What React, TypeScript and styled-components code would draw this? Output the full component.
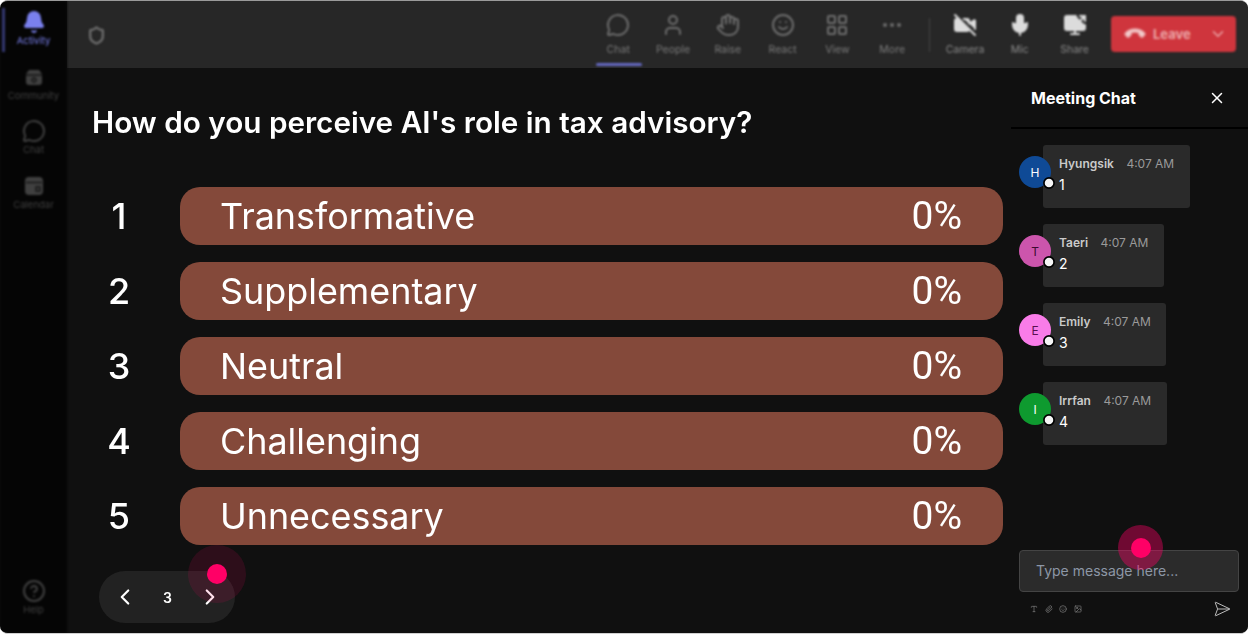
import React from "react";
import styled, { createGlobalStyle } from "styled-components";
import { Bell, MessageCircle, HelpCircle, Shield, User, Hand, Smile, LayoutGrid, MoreHorizontal, VideoOff, Mic, ScreenShare, Phone, ChevronDown, ChevronLeft, ChevronRight, X, SendHorizontal, Type, Paperclip, Image } from "lucide-react";

const Global = createGlobalStyle`
  html, body { margin: 0; padding: 0; background: #fff; }
  body { font-family: Inter, "Liberation Sans", sans-serif; }
  #root { width: 1248px; height: 634px; overflow: hidden; }
`;

const Frame = styled.div`
  position: relative; width: 1248px; border-top: 1px solid #9a9a9a; box-sizing: content-box;
  height: 632px; border-bottom: 1px solid #d0d0d0;
  display: flex; background: #101010; border-radius: 8px; overflow: hidden; color: #fff;
`;
const Rail = styled.nav`
  width: 67px; flex: none; background: #050505; display: flex; flex-direction: column; align-items: center;
  position: relative; padding-top: 9px; box-sizing: border-box; filter: blur(1.1px);
`;
const RailItem = styled.div<{ $active?: boolean }>`
  width: 100%; height: 54.5px; display: flex; flex-direction: column; align-items: center; gap: 1px;
  color: ${p => (p.$active ? "#7a80ee" : "#404040")};
  font-size: 9.5px; line-height: 12px; position: relative;
  ${p => p.$active ? `&::before { content: ""; position: absolute; left: 2px; top: -2px; width: 3px; height: 44px; background: #33376f; }` : ""}
`;
const RailFill = styled.div`flex: 1;`;
const Workspace = styled.div`flex: 1; display: flex; flex-direction: column; min-width: 0;`;
const TopBar = styled.header`
  height: 67px; flex: none; background: #272727; display: flex; align-items: center;
  padding: 0 12px 0 20px; box-sizing: border-box;
`;
const ShieldMark = styled.div`color: #6c6c6c; display: flex; filter: blur(0.9px); margin-top: 2px;`;
const Tools = styled.div`margin-left: auto; display: flex; align-items: flex-start; filter: blur(1.2px);`;
const Tool = styled.div<{ $bright?: boolean; $active?: boolean }>`
  width: 54.8px; height: 67px; position: relative; display: flex; flex-direction: column; align-items: center;
  padding-top: 12px; box-sizing: border-box; gap: 6px; font-size: 10.5px; line-height: 13px;
  color: ${p => (p.$bright ? "#dcdcdc" : "#6d6d6d")};
  & > span { color: ${p => (p.$bright ? "#8a8a8a" : "#7b7b7b")}; }
  ${p => p.$active ? `&::after { content: ""; position: absolute; left: 5px; right: 4px; bottom: 2px; height: 3px; border-radius: 2px; background: #6468c0; }` : ""}
`;
const Divider = styled.div`width: 1px; height: 34px; background: #444; margin: 17px 8px 0 9px;`;
const Leave = styled.div`
  width: 125px; height: 36px; margin: 15px 0 0 9px; background: #cf353d; border-radius: 4px; display: flex; align-items: center;
  padding: 0 9px 0 15px; box-sizing: border-box; gap: 9px; font-size: 13px; font-weight: 700; color: #eba6a8;
`;
const LeaveLabel = styled.span`flex: 1;`;
const Body = styled.div`flex: 1; display: flex; min-height: 0;`;
const Stage = styled.main`
  flex: 1; min-width: 0; padding: 35px 8px 0 25px; display: flex; flex-direction: column; position: relative;
`;
const Title = styled.h1`
  margin: 0 0 46px; font-size: 29.7px; line-height: 38px; font-weight: 600; color: #fff; white-space: nowrap;
`;
const Options = styled.div`display: flex; flex-direction: column; gap: 17px;`;
const Option = styled.div`display: flex; align-items: center; height: 58px;`;
const OptionNumber = styled.div`width: 88px; padding-right: 34px; text-align: center; font-size: 36px; font-weight: 500; box-sizing: border-box; flex: none; line-height: 56px;`;
const OptionBar = styled.div`
  flex: 1; height: 58px; border-radius: 20px; background: #84493a; display: flex; align-items: center; justify-content: space-between;
  padding: 0 41px 1px 40px; box-sizing: border-box; font-size: 35.9px; color: #fff;
`;
const Percent = styled.span`font-family: Roboto, Inter, sans-serif; font-size: 39px;`;
const Pager = styled.div`
  width: 136px; height: 52px; margin: 26px 0 0 7px; border-radius: 26px; background: #222; display: flex; align-items: center; justify-content: space-between;
  padding: 0 12px 0 13px; box-sizing: border-box; font-size: 14px; font-weight: 600;
`;
const Chat = styled.aside`width: 237px; flex: none; display: flex; flex-direction: column; background: #101010;`;
const ChatHeader = styled.div`
  height: 61px; flex: none; box-sizing: border-box; border-bottom: 2px solid #000; display: flex; align-items: center; justify-content: space-between;
  padding: 0 22px 0 20px; font-size: 16px; font-weight: 700;
`;
const Messages = styled.div`flex: 1; padding: 16px 8px 0; display: flex; flex-direction: column; gap: 16.5px;`;
const Message = styled.div`display: flex; align-items: center;`;
const Avatar = styled.div<{ $bg: string; $fg: string }>`
  width: 32px; height: 32px; border-radius: 50%; background: ${p => p.$bg}; color: ${p => p.$fg}; flex: none; margin: 0 -8px 8px 0;
  display: flex; align-items: center; justify-content: center; font-size: 12px; position: relative; z-index: 1;
`;
const Status = styled.i`
  position: absolute; right: -5px; bottom: -2px; width: 10px; height: 10px; border-radius: 50%; background: #f5f5f5; border: 2px solid #000; box-sizing: content-box; transform: scale(.85);
`;
const Bubble = styled.div<{ $w: number }>`
  width: ${p => p.$w}px; height: 62.5px; box-sizing: border-box; background: #2a2a2a; border-radius: 3px; padding: 9.6px 16px 0;
`;
const Meta = styled.div`display: flex; gap: 12.5px; font-size: 12px; line-height: 17px; white-space: nowrap;`;
const Author = styled.span`font-weight: 600; color: #c9c9c9;`;
const Time = styled.span`color: #9a9a9a;`;
const Text = styled.div`font-size: 14px; line-height: 20px; margin-top: 3.6px; color: #fff;`;
const Composer = styled.div`padding: 0 9px 0 8px;`;
const Input = styled.div`
  height: 42px; box-sizing: border-box; background: #2b2b2b; border: 1px solid #444; border-radius: 4px; display: flex; align-items: center;
  padding: 0 16px 2px; color: #8d97a6; font-size: 14px;
`;
const ComposerTools = styled.div`display: flex; align-items: center; height: 41px; padding: 0 8px 8px 11px; box-sizing: border-box; gap: 6.5px; color: #808080;`;
const SendSlot = styled.div`margin-left: auto; color: #d0d0d0; display: flex;`;
const Pointer = styled.div<{ $dim: number; $halo: number; $x: number; $y: number }>`
  position: absolute; left: ${p => p.$x}px; top: ${p => p.$y}px; width: ${p => p.$dim}px; height: ${p => p.$dim}px; border-radius: 50%;
  background: rgba(255, 0, 102, ${p => p.$halo}); display: flex; align-items: center; justify-content: center; z-index: 5;
  &::after { content: ""; width: 20px; height: 20px; border-radius: 50%; background: #ff0066; }
`;

const CommunityIcon = () => (
  <svg width="24" height="24" viewBox="0 0 24 24" fill="currentColor">
    <path d="M4 9 L7 5 H17 L20 9 V17 a3 3 0 0 1 -3 3 H7 a3 3 0 0 1 -3 -3 Z" />
    <path d="M4 10 H20 M12 13 a2 2 0 1 0 .01 0" stroke="#151515" strokeWidth="1.5" fill="none" />
  </svg>
);
const CalendarIcon = () => (
  <svg width="24" height="24" viewBox="0 0 24 24" fill="currentColor">
    <rect x="3" y="3" width="18" height="18" rx="4" />
    <path d="M4 8.5 H20 M14 13 h4 v4 h-4 Z" stroke="#151515" strokeWidth="1.4" fill="none" />
  </svg>
);

const options = ["Transformative", "Supplementary", "Neutral", "Challenging", "Unnecessary"];
const msgs = [
  { n: "Hyungsik", l: "H", bg: "#0f4a96", fg: "#fff", t: "1", w: 147 },
  { n: "Taeri", l: "T", bg: "#cc55ac", fg: "#3c0a30", t: "2", w: 121 },
  { n: "Emily", l: "E", bg: "#f97ce8", fg: "#5a1050", t: "3", w: 123 },
  { n: "Irrfan", l: "I", bg: "#0e9a2f", fg: "#fff", t: "4", w: 124 },
];

export default function App() {
  return (
    <>
      <Global />
      <Frame>
        <Rail>
          <RailItem $active><Bell size={24} fill="currentColor" />Activity</RailItem>
          <RailItem><CommunityIcon />Community</RailItem>
          <RailItem><MessageCircle size={24} />Chat</RailItem>
          <RailItem><CalendarIcon />Calendar</RailItem>
          <RailFill />
          <RailItem><HelpCircle size={24} />Help</RailItem>
        </Rail>
        <Workspace>
          <TopBar>
            <ShieldMark><Shield size={19} strokeWidth={3} /></ShieldMark>
            <Tools>
              <Tool $active><MessageCircle size={24} /><span>Chat</span></Tool>
              <Tool><User size={24} /><span>People</span></Tool>
              <Tool><Hand size={24} /><span>Raise</span></Tool>
              <Tool><Smile size={24} /><span>React</span></Tool>
              <Tool><LayoutGrid size={24} /><span>View</span></Tool>
              <Tool><MoreHorizontal size={24} /><span>More</span></Tool>
              <Divider />
              <Tool $bright><VideoOff size={24} fill="currentColor" /><span>Camera</span></Tool>
              <Tool $bright><Mic size={24} fill="currentColor" /><span>Mic</span></Tool>
              <Tool $bright><ScreenShare size={24} fill="currentColor" /><span>Share</span></Tool>
              <Leave>
                <Phone size={18} fill="#f3d0d0" style={{ transform: "rotate(135deg)" }} />
                <LeaveLabel>Leave</LeaveLabel>
                <ChevronDown size={18} />
              </Leave>
            </Tools>
          </TopBar>
          <Body>
            <Stage>
              <Title>How do you perceive AI's role in tax advisory?</Title>
              <Options>
                {options.map((o, i) => (
                  <Option key={o}>
                    <OptionNumber>{i + 1}</OptionNumber>
                    <OptionBar><span>{o}</span><Percent>0%</Percent></OptionBar>
                  </Option>
                ))}
              </Options>
              <Pager>
                <ChevronLeft size={26} strokeWidth={2} />
                <span>3</span>
                <ChevronRight size={26} strokeWidth={2} />
              </Pager>
            </Stage>
            <Chat>
              <ChatHeader>Meeting Chat<X size={18} /></ChatHeader>
              <Messages>
                {msgs.map(m => (
                  <Message key={m.n}>
                    <Avatar $bg={m.bg} $fg={m.fg}>{m.l}<Status /></Avatar>
                    <Bubble $w={m.w}>
                      <Meta><Author>{m.n}</Author><Time>4:07 AM</Time></Meta>
                      <Text>{m.t}</Text>
                    </Bubble>
                  </Message>
                ))}
              </Messages>
              <Composer>
                <Input>Type message here...</Input>
                <ComposerTools>
                  <Type size={8} /><Paperclip size={8} /><Smile size={8} /><Image size={8} />
                  <SendSlot><SendHorizontal size={18} strokeWidth={1.2} /></SendSlot>
                </ComposerTools>
              </Composer>
            </Chat>
          </Body>
        </Workspace>
        <Pointer $dim={58} $halo={0.12} $x={188} $y={544} />
        <Pointer $dim={45} $halo={0.4} $x={1118} $y={524} />
      </Frame>
    </>
  );
}
